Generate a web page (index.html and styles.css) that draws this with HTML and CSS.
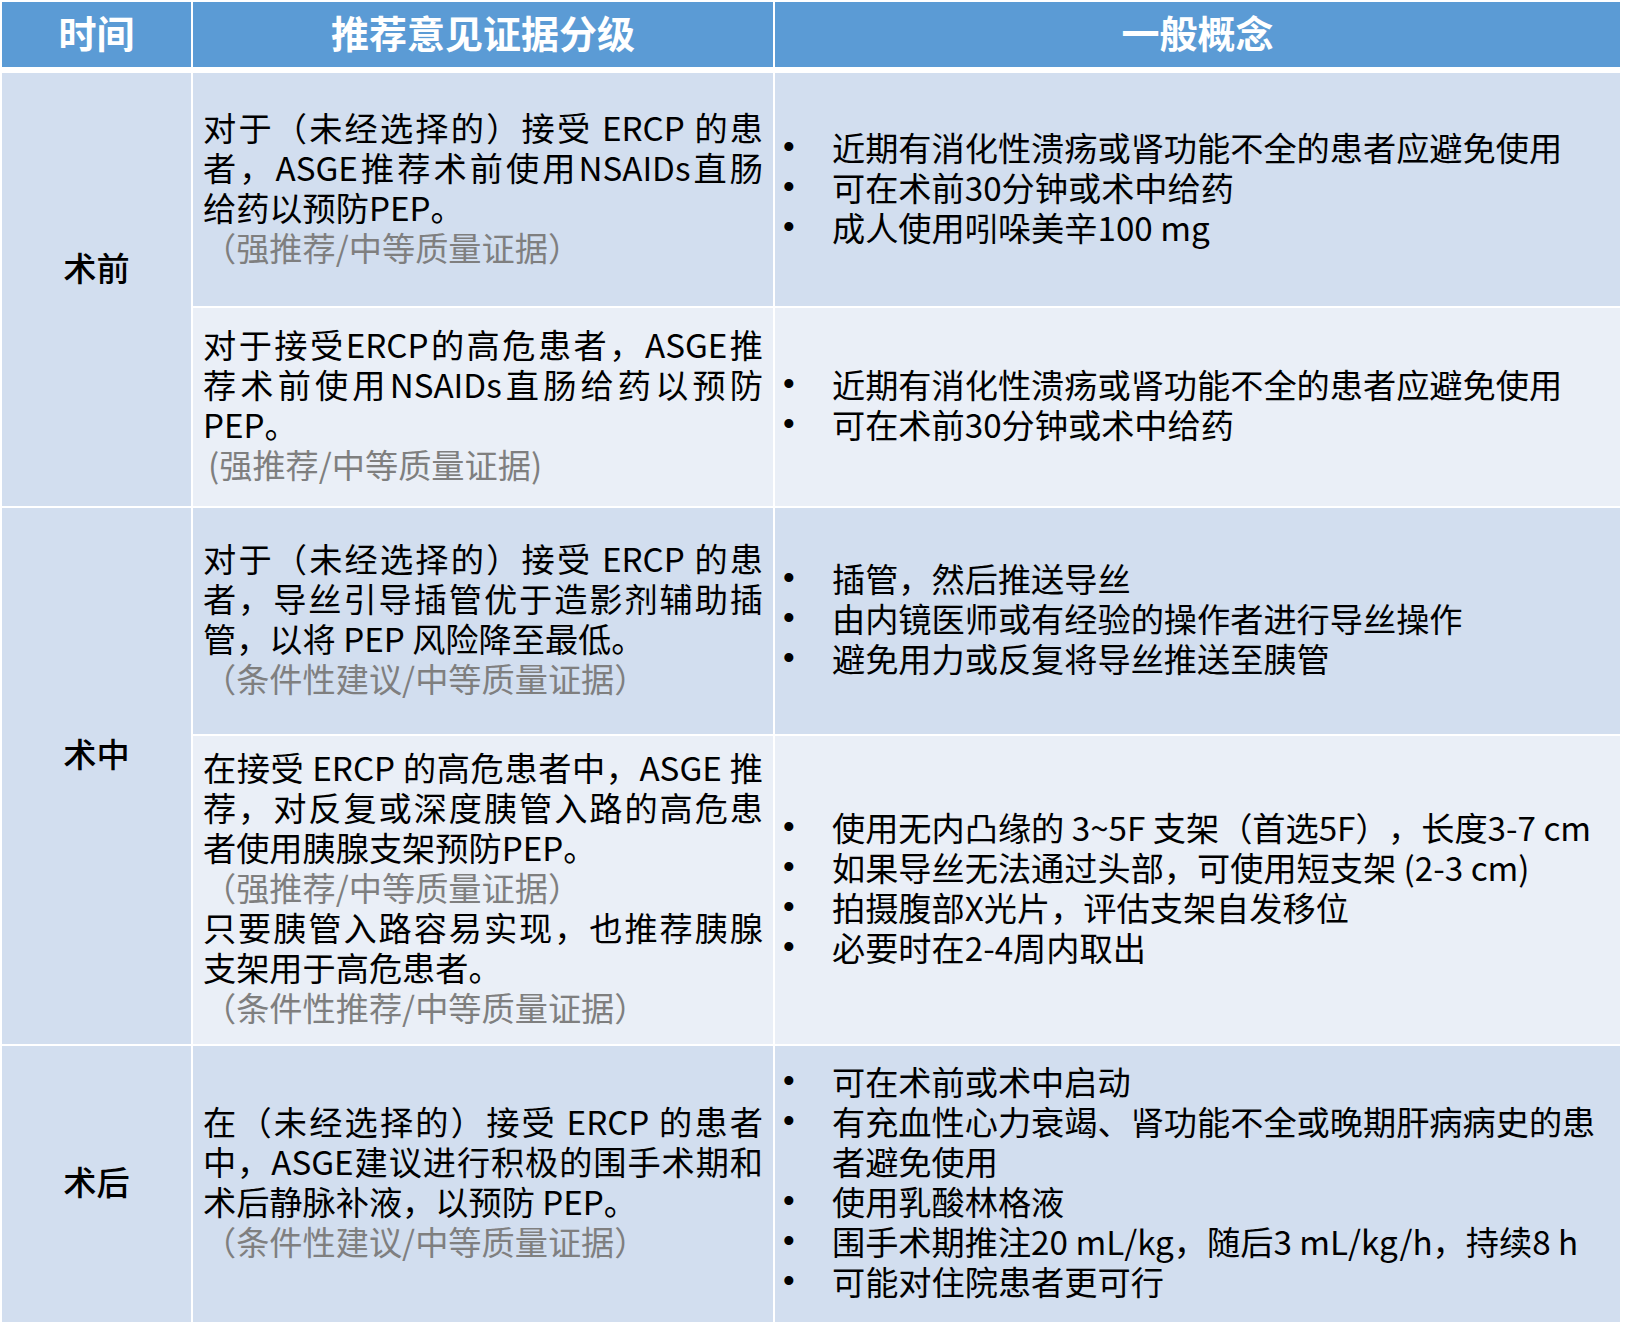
FILE: index.html
```html
<!DOCTYPE html>
<html lang="zh-CN">
<head>
<meta charset="utf-8">
<title>ERCP 推荐意见</title>
<link rel="stylesheet" href="styles.css">
</head>
<body>
<table class="grid">
  <colgroup>
    <col class="c-time">
    <col class="c-rec">
    <col class="c-gen">
  </colgroup>
  <thead>
    <tr class="r-head">
      <th>时间</th>
      <th>推荐意见证据分级</th>
      <th>一般概念</th>
    </tr>
  </thead>
  <tbody>
    <tr class="r1a dark">
      <td class="time lift" rowspan="2">术前</td>
      <td class="rec">
        <span class="ln j">对于（未经选择的）接受 ERCP 的患</span>
        <span class="ln j">者，ASGE推荐术前使用NSAIDs直肠</span>
        <span class="ln">给药以预防PEP。</span>
        <span class="ln gray">（强推荐/中等质量证据）</span>
      </td>
      <td class="gen">
        <ul>
          <li><span class="dot">•</span><span>近期有消化性溃疡或肾功能不全的患者应避免使用</span></li>
          <li><span class="dot">•</span><span>可在术前30分钟或术中给药</span></li>
          <li><span class="dot">•</span><span>成人使用吲哚美辛100 mg</span></li>
        </ul>
      </td>
    </tr>
    <tr class="r1b light">
      <td class="rec">
        <span class="ln j">对于接受ERCP的高危患者，ASGE推</span>
        <span class="ln j">荐术前使用NSAIDs直肠给药以预防</span>
        <span class="ln">PEP。</span>
        <span class="ln gray half">(强推荐/中等质量证据)</span>
      </td>
      <td class="gen">
        <ul>
          <li><span class="dot">•</span><span>近期有消化性溃疡或肾功能不全的患者应避免使用</span></li>
          <li><span class="dot">•</span><span>可在术前30分钟或术中给药</span></li>
        </ul>
      </td>
    </tr>
    <tr class="r2a dark">
      <td class="time lift" rowspan="2">术中</td>
      <td class="rec">
        <span class="ln j">对于（未经选择的）接受 ERCP 的患</span>
        <span class="ln j">者，导丝引导插管优于造影剂辅助插</span>
        <span class="ln">管，以将 PEP 风险降至最低。</span>
        <span class="ln gray">（条件性建议/中等质量证据）</span>
      </td>
      <td class="gen">
        <ul>
          <li><span class="dot">•</span><span>插管，然后推送导丝</span></li>
          <li><span class="dot">•</span><span>由内镜医师或有经验的操作者进行导丝操作</span></li>
          <li><span class="dot">•</span><span>避免用力或反复将导丝推送至胰管</span></li>
        </ul>
      </td>
    </tr>
    <tr class="r2b light">
      <td class="rec">
        <span class="ln j">在接受 ERCP 的高危患者中，ASGE 推</span>
        <span class="ln j">荐，对反复或深度胰管入路的高危患</span>
        <span class="ln">者使用胰腺支架预防PEP。</span>
        <span class="ln gray">（强推荐/中等质量证据）</span>
        <span class="ln j">只要胰管入路容易实现，也推荐胰腺</span>
        <span class="ln">支架用于高危患者。</span>
        <span class="ln gray">（条件性推荐/中等质量证据）</span>
      </td>
      <td class="gen">
        <ul>
          <li><span class="dot">•</span><span>使用无内凸缘的 3~5F 支架（首选5F）<span class="gap">，</span>长度3-7 cm</span></li>
          <li><span class="dot">•</span><span>如果导丝无法通过头部，可使用短支架 (2-3 cm)</span></li>
          <li><span class="dot">•</span><span>拍摄腹部X光片，评估支架自发移位</span></li>
          <li><span class="dot">•</span><span>必要时在2-4周内取出</span></li>
        </ul>
      </td>
    </tr>
    <tr class="r3 dark">
      <td class="time">术后</td>
      <td class="rec">
        <span class="ln j">在（未经选择的）接受 ERCP 的患者</span>
        <span class="ln j">中，ASGE建议进行积极的围手术期和</span>
        <span class="ln">术后静脉补液，以预防 PEP。</span>
        <span class="ln gray">（条件性建议/中等质量证据）</span>
      </td>
      <td class="gen">
        <ul>
          <li><span class="dot">•</span><span>可在术前或术中启动</span></li>
          <li><span class="dot">•</span><span>有充血性心力衰竭、肾功能不全或晚期肝病病史的患<br>者避免使用</span></li>
          <li><span class="dot">•</span><span>使用乳酸林格液</span></li>
          <li><span class="dot">•</span><span>围手术期推注20 mL/kg，随后3 mL/kg/h，持续8 h</span></li>
          <li><span class="dot">•</span><span>可能对住院患者更可行</span></li>
        </ul>
      </td>
    </tr>
  </tbody>
</table>
</body>
</html>
```
FILE: styles.css
```css
html, body {
  margin: 0;
  padding: 0;
  background: #ffffff;
}

body {
  font-family: "Noto Sans CJK SC", "Noto Sans", sans-serif;
  color: #000000;
}

.grid {
  border-collapse: separate;
  border-spacing: 2px;
  table-layout: fixed;
  width: 1622px;
}

.c-time { width: 189px; }
.c-rec { width: 580px; }
.c-gen { width: 845px; }

th, td {
  padding: 0 0 6px 0;
  vertical-align: middle;
}

.r-head th {
  height: 59px;
  background: #5b9bd5;
  color: #ffffff;
  font-size: 38px;
  font-weight: 700;
  line-height: 40px;
  text-align: center;
  border-bottom: 4px solid #ffffff;
}

.r1a { height: 233px; }
.r1b { height: 198px; }
.r2a { height: 226px; }
.r2b { height: 308px; }
.r3 { height: 276px; }

.dark td { background: #d2deef; }
.light td { background: #eaeff7; }
td.time { background: #d2deef; }

.time {
  font-size: 33.2px;
  font-weight: 500;
  line-height: 40px;
  text-align: center;
}

.time.lift {
  padding-bottom: 46px;
}

.rec {
  padding: 0 10px 6px 10px;
  font-size: 33.2px;
  line-height: 40px;
}

.ln {
  display: block;
  white-space: nowrap;
  text-align: left;
}

.ln.j {
  text-align: justify;
  text-align-last: justify;
  text-justify: inter-character;
}

.gray {
  color: #7f7f7f;
}

.gray.half {
  padding-left: 5px;
}

.gen {
  padding: 0 6px 6px 8px;
  font-size: 33.2px;
  line-height: 40px;
}

.gen ul {
  list-style: none;
  margin: 0;
  padding: 0;
}

.gen li {
  display: grid;
  grid-template-columns: 49px 1fr;
  white-space: nowrap;
}

.dot {
  display: block;
  font-family: "Liberation Sans", Arial, sans-serif;
}

.gap {
  margin-left: 16px;
}
```
